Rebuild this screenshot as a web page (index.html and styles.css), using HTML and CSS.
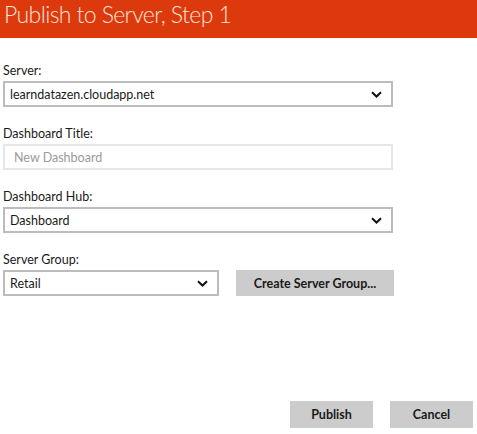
FILE: index.html
```html
<!DOCTYPE html>
<html lang="en">
<head>
  <meta charset="UTF-8" />
  <title>Publish to Server, Step 1</title>
  <link rel="stylesheet" href="styles.css">
</head>
<body>
  <div class="page">
    <header class="title-bar">
      <h1>Publish to Server, Step 1</h1>
    </header>

    <form class="publish-form">
      <div class="field">
        <label>Server:</label>
        <div class="select wide">
          <span>learndatazen.cloudapp.net</span>
          <svg class="chevron" width="11" height="7" viewBox="0 0 11 7"><path d="M1 1.2 L5.5 5.5 L10 1.2" fill="none" stroke="#111" stroke-width="2"/></svg>
        </div>
      </div>

      <div class="field">
        <label>Dashboard Title:</label>
        <div class="textbox wide">
          <span class="placeholder">New Dashboard</span>
        </div>
      </div>

      <div class="field">
        <label>Dashboard Hub:</label>
        <div class="select wide">
          <span>Dashboard</span>
          <svg class="chevron" width="11" height="7" viewBox="0 0 11 7"><path d="M1 1.2 L5.5 5.5 L10 1.2" fill="none" stroke="#111" stroke-width="2"/></svg>
        </div>
      </div>

      <div class="field">
        <label>Server Group:</label>
        <div class="row">
          <div class="select narrow">
            <span>Retail</span>
            <svg class="chevron" width="11" height="7" viewBox="0 0 11 7"><path d="M1 1.2 L5.5 5.5 L10 1.2" fill="none" stroke="#111" stroke-width="2"/></svg>
          </div>
          <button type="button" class="btn group-btn">Create Server Group...</button>
        </div>
      </div>
    </form>

    <div class="actions">
      <button type="button" class="btn">Publish</button>
      <button type="button" class="btn">Cancel</button>
    </div>
  </div>
</body>
</html>
```

FILE: styles.css
```css
body {
  margin: 0;
  background: #ffffff;
  font-family: 'Lato', 'Open Sans', sans-serif;
  font-size: 12.5px;
  color: #1a1a1a;
}

.page {
  height: 434px;
  display: flex;
  flex-direction: column;
  overflow: hidden;
}

.title-bar {
  background: #dc3a0d;
  height: 38px;
  padding-left: 4px;
  overflow: hidden;
}

.title-bar h1 {
  margin: 0;
  color: #fbe3d9;
  font-family: 'Lato', 'Open Sans', sans-serif;
  font-weight: 300;
  font-size: 23px;
  line-height: normal;
  letter-spacing: -0.6px;
}

.publish-form {
  padding: 24px 0 0 3px;
  display: flex;
  flex-direction: column;
  gap: 18px;
}

.field label {
  display: block;
  height: 19px;
  line-height: 17px;
}

.select,
.textbox {
  box-sizing: border-box;
  height: 26px;
  border: 2px solid #bcbcbc;
  display: flex;
  align-items: center;
  justify-content: space-between;
  padding: 0 9px 0 5px;
}

.textbox {
  border-color: #e6e6e6;
  padding-left: 9px;
}

.placeholder {
  color: #9a9a9a;
}

.wide {
  width: 390px;
}

.narrow {
  width: 216px;
}

.row {
  display: flex;
  gap: 17px;
}

.btn {
  font-family: 'Lato', 'Open Sans', sans-serif;
  font-size: 12.5px;
  font-weight: 700;
  color: #1a1a1a;
  background: #cccccc;
  border: none;
  height: 26px;
  padding: 0;
}

.group-btn {
  width: 158px;
}

.actions {
  margin-top: auto;
  margin-bottom: 6px;
  display: flex;
  justify-content: flex-end;
  gap: 17px;
  padding-right: 4px;
}

.actions .btn {
  width: 83px;
  height: 27px;
}
```
